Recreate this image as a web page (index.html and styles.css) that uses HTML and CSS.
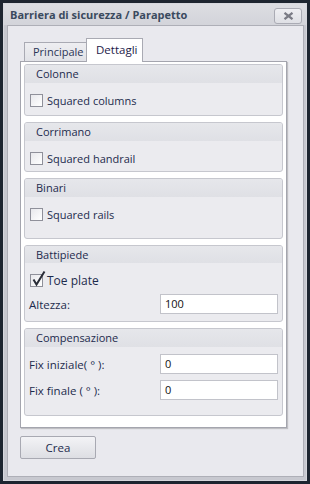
FILE: index.html
```html
<!DOCTYPE html>
<html>
<head>
<meta charset="utf-8">
<link rel="stylesheet" href="styles.css">
</head>
<body>
<div class="window">
  <div class="titlebar">
    <span class="title">Barriera di sicurezza / Parapetto</span>
    <div class="close"><svg width="11" height="8" viewBox="0 0 11 8"><path d="M1.5 0.8 L9.5 7.2 M9.5 0.8 L1.5 7.2" stroke="#7a7b85" stroke-width="2.2" fill="none"/></svg></div>
  </div>
  <div class="client">
    <div class="tabs">
      <div class="tab">Principale</div>
      <div class="tab active">Dettagli</div>
    </div>
    <div class="panel">
      <div class="group g-colonne">
        <div class="ghead">Colonne</div>
        <div class="gbody">
          <div class="check"><span class="box"></span>Squared columns</div>
        </div>
      </div>
      <div class="group g-corrimano">
        <div class="ghead">Corrimano</div>
        <div class="gbody">
          <div class="check"><span class="box"></span>Squared handrail</div>
        </div>
      </div>
      <div class="group g-binari">
        <div class="ghead">Binari</div>
        <div class="gbody">
          <div class="check"><span class="box"></span>Squared rails</div>
        </div>
      </div>
      <div class="group g-batti">
        <div class="ghead">Battipiede</div>
        <div class="gbody">
          <div class="check checked"><span class="box"><svg class="tick" width="16" height="17" viewBox="0 0 16 17"><path d="M2.5 9.5 L5.5 14.5 L13.5 1.5" stroke="#2a2d38" stroke-width="2" fill="none" stroke-linejoin="miter"/></svg></span>Toe plate</div>
          <div class="field"><span class="label">Altezza:</span><span class="input">100</span></div>
        </div>
      </div>
      <div class="group g-comp">
        <div class="ghead">Compensazione</div>
        <div class="gbody">
          <div class="field"><span class="label">Fix iniziale( ° ):</span><span class="input">0</span></div>
          <div class="field"><span class="label">Fix finale ( ° ):</span><span class="input">0</span></div>
        </div>
      </div>
    </div>
    <div class="btn">Crea</div>
  </div>
</div>
</body>
</html>
```
FILE: styles.css
```css
html, body {
  margin: 0;
  padding: 0;
}
body {
  background: #1d2530;
  width: 310px;
  height: 484px;
  overflow: hidden;
  font-family: "Open Sans", "Noto Sans", sans-serif;
  font-size: 11px;
  color: #1d2b4d;
}
.window {
  box-sizing: border-box;
  margin: 3px 0 0 3px;
  width: 304px;
  height: 478px;
  border: 1px solid #d6d7dd;
  background: #c7c8cf;
  padding: 0 2px 3px 3px;
  display: flex;
  flex-direction: column;
}
.titlebar {
  height: 21px;
  margin: 0 -2px 0 -3px;
  padding: 0 4px 0 6px;
  background: linear-gradient(#dcdde2, #d3d4da);
  display: flex;
  align-items: center;
  justify-content: space-between;
}
.title {
  font-weight: bold;
  font-size: 11px;
  color: #3a4a5e;
  letter-spacing: 0;
}
.close {
  box-sizing: border-box;
  width: 28px;
  height: 16px;
  margin-top: 2px;
  border: 1px solid #aaabb4;
  border-radius: 3px;
  background: linear-gradient(#eeeef2, #dfe0e5);
  display: flex;
  align-items: center;
  justify-content: center;
}
.client {
  flex: 1;
  border: 1px solid #aeafb7;
  background: #e9e9ee;
  padding: 12px 0 0 12px;
  display: flex;
  flex-direction: column;
  align-items: flex-start;
}
.tabs {
  display: flex;
  align-items: flex-end;
  margin-left: 4px;
  height: 23px;
}
.tab {
  box-sizing: border-box;
  height: 19px;
  width: 62px;
  border: 1px solid #a9aab3;
  border-right: 0;
  border-bottom: 0;
  background: linear-gradient(#eeeef1, #e1e2e7);
  color: #2b3556;
  line-height: 18px;
  padding-left: 8px;
}
.tab.active {
  position: relative;
  z-index: 1;
  height: 24px;
  width: 57px;
  margin-bottom: -1px;
  border-right: 1px solid #a9aab3;
  background: #ffffff;
  color: #1d2048;
  padding-left: 9px;
  line-height: 22px;
  font-size: 11.5px;
}
.panel {
  box-sizing: border-box;
  width: 267px;
  border: 1px solid #a4a5ae;
  background: #ffffff;
  padding: 2px 3px 11px 3px;
  box-shadow: 1px 1px 1px rgba(0, 0, 0, 0.18);
  display: flex;
  flex-direction: column;
  gap: 6px;
}
.group {
  border: 1px solid #c6c7ce;
  border-radius: 3px;
  background: #ebebef;
  overflow: hidden;
}
.ghead {
  height: 18px;
  line-height: 18px;
  padding-left: 11px;
  background: linear-gradient(#e6e7eb, #dfe0e5);
  color: #1d2b4d;
}
.gbody {
  padding: 11px 4px 7px 4px;
  display: flex;
  flex-direction: column;
}
.g-colonne .gbody { padding-bottom: 8px; }
.g-corrimano .gbody { padding-bottom: 6px; }
.g-binari .gbody { padding-bottom: 17px; }
.g-batti .ghead { height: 17px; line-height: 17px; }
.g-batti .gbody { padding-top: 10px; padding-bottom: 7px; gap: 7px; }
.g-comp .gbody { padding-top: 7px; padding-bottom: 15px; gap: 6px; }
.check {
  display: flex;
  align-items: center;
  height: 13px;
  padding-left: 1px;
  gap: 4px;
  white-space: nowrap;
}
.check.checked { height: 14px; font-size: 12px; }
.box {
  position: relative;
  box-sizing: border-box;
  width: 13px;
  height: 13px;
  border: 1px solid #8f909a;
  background: linear-gradient(135deg, #e8e8ec, #ffffff);
  flex: none;
}
.tick {
  position: absolute;
  left: 0;
  top: -5px;
}
.field {
  display: flex;
  align-items: center;
  height: 20px;
}
.label {
  flex: 1;
  font-size: 11.5px;
}
.input {
  box-sizing: border-box;
  width: 118px;
  height: 20px;
  border: 1px solid #c2c3ca;
  background: #ffffff;
  padding-left: 4px;
  line-height: 18px;
  font-size: 11px;
  color: #111;
}
.btn {
  box-sizing: border-box;
  margin-top: 8px;
  width: 76px;
  height: 23px;
  border: 1px solid #a8a9b2;
  border-radius: 2px;
  background: linear-gradient(#f3f3f6, #dddee3);
  text-align: center;
  line-height: 21px;
  font-size: 11.5px;
  color: #1d2b4d;
}
```
